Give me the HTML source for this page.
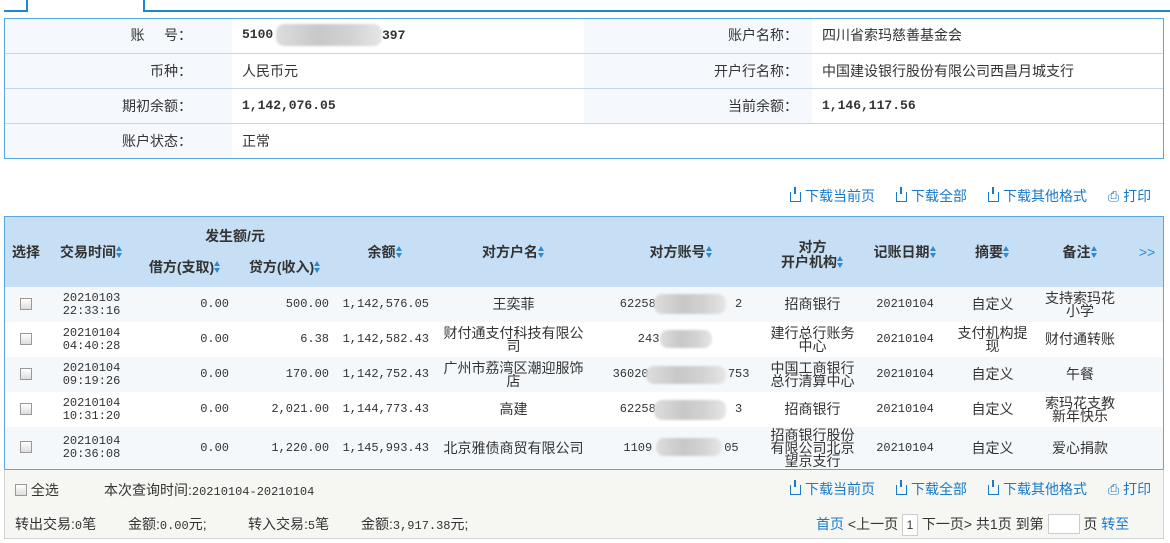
<!DOCTYPE html>
<html><head><meta charset="utf-8"><style>
*{margin:0;padding:0;box-sizing:border-box}
body{width:1170px;height:543px;background:#fff;font-family:"Liberation Sans","Noto Sans CJK SC",sans-serif;font-size:14px;color:#333;position:relative;overflow:hidden}
.a{position:absolute}
.mono{font-family:"Liberation Mono","Noto Sans CJK SC",monospace;font-size:12px}
.blur{position:absolute;background:linear-gradient(90deg,#ddd,#c8c8c8 40%,#d2d2d2 70%,#e6e6e6);border-radius:8px;filter:blur(1px)}
.info{left:4px;top:18px;width:1160px;height:141px}
.row{position:absolute;left:0;width:1160px;height:35px;border-top:1px solid #c5d6e8}
.lab{position:absolute;top:0;height:35px;line-height:34px;background:#f5f9fd;text-align:right}
.val{position:absolute;top:0;height:35px;line-height:34px;padding-left:10px}
.lnk{color:#1a7ac8;font-size:14px}
.dl{display:inline-block;width:11px;height:10px;border:1.5px solid #1a7ac8;border-top:none;position:relative;margin-right:4px;vertical-align:-1px}
.dl:after{content:"";position:absolute;left:3px;top:-5px;width:2px;height:7px;background:#1a7ac8}
table{position:absolute;left:4px;top:216px;width:1160px;border-collapse:collapse;table-layout:fixed}
th{background:#c6dff5;font-weight:bold;font-size:14px;color:#333}
td{text-align:center;font-size:14px;line-height:13px;height:35px}
tr.o td{background:#f4f8fb}
.s{display:inline-block;width:7px;height:12px;vertical-align:-1px;position:relative}
.s:before{content:"";position:absolute;left:0;top:0;border:3.5px solid transparent;border-bottom:5px solid #2b8ad8;border-top:none}
.s:after{content:"";position:absolute;left:0;top:7px;border:3.5px solid transparent;border-top:5px solid #2b8ad8;border-bottom:none}
.cb{display:inline-block;width:12px;height:12px;border:1px solid #999;background:linear-gradient(#fff,#ddd)}
.r{text-align:right;padding-right:6px}
</style></head><body>
<div class="a" style="left:4px;top:10px;width:24px;height:2px;background:#1a8ad4"></div>
<div class="a" style="left:26px;top:0;width:2px;height:12px;background:#1a8ad4"></div>
<div class="a" style="left:143px;top:0;width:2px;height:12px;background:#1a8ad4"></div>
<div class="a" style="left:143px;top:10px;width:1027px;height:2px;background:#1a8ad4"></div>

<div class="a info">
 <div class="row" style="top:0;border-top:none">
  <div class="lab" style="left:0;width:228px;padding-right:40px">账&nbsp;&nbsp;&nbsp;&nbsp;&nbsp;号：</div>
  <div class="val mono" style="left:228px;font-weight:bold;font-size:13px">5100</div>
  <div class="lab" style="left:580px;width:228px;padding-right:14px">账户名称：</div>
  <div class="val" style="left:808px">四川省索玛慈善基金会</div>
 </div>
 <div class="row" style="top:35px">
  <div class="lab" style="left:0;width:228px;padding-right:40px">币种：</div>
  <div class="val" style="left:228px">人民币元</div>
  <div class="lab" style="left:580px;width:228px;padding-right:14px">开户行名称：</div>
  <div class="val" style="left:808px">中国建设银行股份有限公司西昌月城支行</div>
 </div>
 <div class="row" style="top:70px">
  <div class="lab" style="left:0;width:228px;padding-right:40px">期初余额：</div>
  <div class="val mono" style="left:228px;font-weight:bold;font-size:13px">1,142,076.05</div>
  <div class="lab" style="left:580px;width:228px;padding-right:14px">当前余额：</div>
  <div class="val mono" style="left:808px;font-weight:bold;font-size:13px">1,146,117.56</div>
 </div>
 <div class="row" style="top:105px">
  <div class="lab" style="left:0;width:228px;padding-right:40px">账户状态：</div>
  <div class="val" style="left:228px">正常</div>
 </div>
</div>
<div class="a" style="left:4px;top:18px;width:1160px;height:141px;border:1px solid #5aa7e0"></div>
<div class="blur" style="left:276px;top:24px;width:106px;height:22px"></div>
<div class="a mono" style="left:382px;top:28px;font-weight:bold;font-size:13px">397</div>

<div class="a lnk" style="left:790px;top:186px"><span class="dl"></span>下载当前页</div>
<div class="a lnk" style="left:896px;top:186px"><span class="dl"></span>下载全部</div>
<div class="a lnk" style="left:988px;top:186px"><span class="dl"></span>下载其他格式</div>
<div class="a lnk" style="left:1108px;top:186px">⎙ 打印</div>

<table>
<colgroup><col style="width:44px"><col style="width:87px"><col style="width:100px"><col style="width:100px"><col style="width:100px"><col style="width:157px"><col style="width:178px"><col style="width:85px"><col style="width:100px"><col style="width:75px"><col style="width:100px"><col style="width:34px"></colgroup>
<tr style="height:36px"><th rowspan="2">选择</th><th rowspan="2">交易时间<span class="s"></span></th><th colspan="2" style="padding-top:4px">发生额/元</th><th rowspan="2">余额<span class="s"></span></th><th rowspan="2">对方户名<span class="s"></span></th><th rowspan="2">对方账号<span class="s"></span></th><th rowspan="2" style="line-height:15px;padding-top:6px">对方<br>开户机构<span class="s"></span></th><th rowspan="2">记账日期<span class="s"></span></th><th rowspan="2">摘要<span class="s"></span></th><th rowspan="2">备注<span class="s"></span></th><th rowspan="2" style="color:#2b8ad8;font-weight:normal">&gt;&gt;</th></tr>
<tr style="height:35px"><th style="padding-bottom:6px">借方(支取)<span class="s"></span></th><th style="padding-bottom:6px">贷方(收入)<span class="s"></span></th></tr>
<tr class="o"><td><span class="cb"></span></td><td class="mono">20210103<br>22:33:16</td><td class="mono r">0.00</td><td class="mono r">500.00</td><td class="mono r">1,142,576.05</td><td>王奕菲</td><td class="mono">622588&nbsp;&nbsp;&nbsp;&nbsp;&nbsp;&nbsp;&nbsp;&nbsp;&nbsp;&nbsp;2</td><td>招商银行</td><td class="mono">20210104</td><td>自定义</td><td>支持索玛花<br>小学</td><td></td></tr>
<tr><td><span class="cb"></span></td><td class="mono">20210104<br>04:40:28</td><td class="mono r">0.00</td><td class="mono r">6.38</td><td class="mono r">1,142,582.43</td><td>财付通支付科技有限公<br>司</td><td class="mono">243&nbsp;&nbsp;&nbsp;&nbsp;&nbsp;&nbsp;&nbsp;&nbsp;&nbsp;</td><td>建行总行账务<br>中心</td><td class="mono">20210104</td><td>支付机构提<br>现</td><td>财付通转账</td><td></td></tr>
<tr class="o"><td><span class="cb"></span></td><td class="mono">20210104<br>09:19:26</td><td class="mono r">0.00</td><td class="mono r">170.00</td><td class="mono r">1,142,752.43</td><td>广州市荔湾区潮迎服饰<br>店</td><td class="mono">36020&nbsp;&nbsp;&nbsp;&nbsp;&nbsp;&nbsp;&nbsp;&nbsp;&nbsp;&nbsp;&nbsp;753</td><td>中国工商银行<br>总行清算中心</td><td class="mono">20210104</td><td>自定义</td><td>午餐</td><td></td></tr>
<tr><td><span class="cb"></span></td><td class="mono">20210104<br>10:31:20</td><td class="mono r">0.00</td><td class="mono r">2,021.00</td><td class="mono r">1,144,773.43</td><td>高建</td><td class="mono">622588&nbsp;&nbsp;&nbsp;&nbsp;&nbsp;&nbsp;&nbsp;&nbsp;&nbsp;&nbsp;3</td><td>招商银行</td><td class="mono">20210104</td><td>自定义</td><td>索玛花支教<br>新年快乐</td><td></td></tr>
<tr class="o" style="height:42px"><td><span class="cb"></span></td><td class="mono">20210104<br>20:36:08</td><td class="mono r">0.00</td><td class="mono r">1,220.00</td><td class="mono r">1,145,993.43</td><td>北京雅债商贸有限公司</td><td class="mono">1109&nbsp;&nbsp;&nbsp;&nbsp;&nbsp;&nbsp;&nbsp;&nbsp;&nbsp;&nbsp;05</td><td>招商银行股份<br>有限公司北京<br>望京支行</td><td class="mono">20210104</td><td>自定义</td><td>爱心捐款</td><td></td></tr>
</table>
<div class="a" style="left:4px;top:216px;width:1160px;height:254px;border:1px solid #5aa7e0"></div>
<div class="blur" style="left:654px;top:294px;width:72px;height:20px"></div>
<div class="blur" style="left:660px;top:330px;width:52px;height:18px"></div>
<div class="blur" style="left:646px;top:366px;width:80px;height:18px"></div>
<div class="blur" style="left:654px;top:400px;width:72px;height:20px"></div>
<div class="blur" style="left:656px;top:438px;width:66px;height:18px"></div>

<div class="a" style="left:4px;top:469px;width:1160px;height:70px;background:#f6f7f2;border:1px solid #d4d4d4;border-top:1px solid #5aa7e0"></div>
<div class="a" style="left:15px;top:480px"><span class="cb" style="vertical-align:-1px"></span> 全选</div>
<div class="a" style="left:104px;top:480px">本次查询时间:<span class="mono">20210104-20210104</span></div>
<div class="a lnk" style="left:790px;top:479px"><span class="dl"></span>下载当前页</div>
<div class="a lnk" style="left:896px;top:479px"><span class="dl"></span>下载全部</div>
<div class="a lnk" style="left:988px;top:479px"><span class="dl"></span>下载其他格式</div>
<div class="a lnk" style="left:1108px;top:479px">⎙ 打印</div>
<div class="a" style="left:15px;top:514px">转出交易:<span class="mono">0</span>笔</div>
<div class="a" style="left:128px;top:514px">金额:<span class="mono">0.00</span>元;</div>
<div class="a" style="left:248px;top:514px">转入交易:<span class="mono">5</span>笔</div>
<div class="a" style="left:361px;top:514px">金额:<span class="mono">3,917.38</span>元;</div>
<div class="a" style="left:816px;top:514px"><span class="lnk">首页</span> &lt;上一页 <span style="display:inline-block;border:1px solid #ccc;background:#fff;width:16px;height:22px;text-align:center;line-height:20px;font-size:12px">1</span> 下一页&gt; 共1页 到第 <span style="display:inline-block;border:1px solid #ccc;background:#fff;width:32px;height:20px;vertical-align:-5px"></span> 页 <span class="lnk">转至</span></div>
</body></html>
